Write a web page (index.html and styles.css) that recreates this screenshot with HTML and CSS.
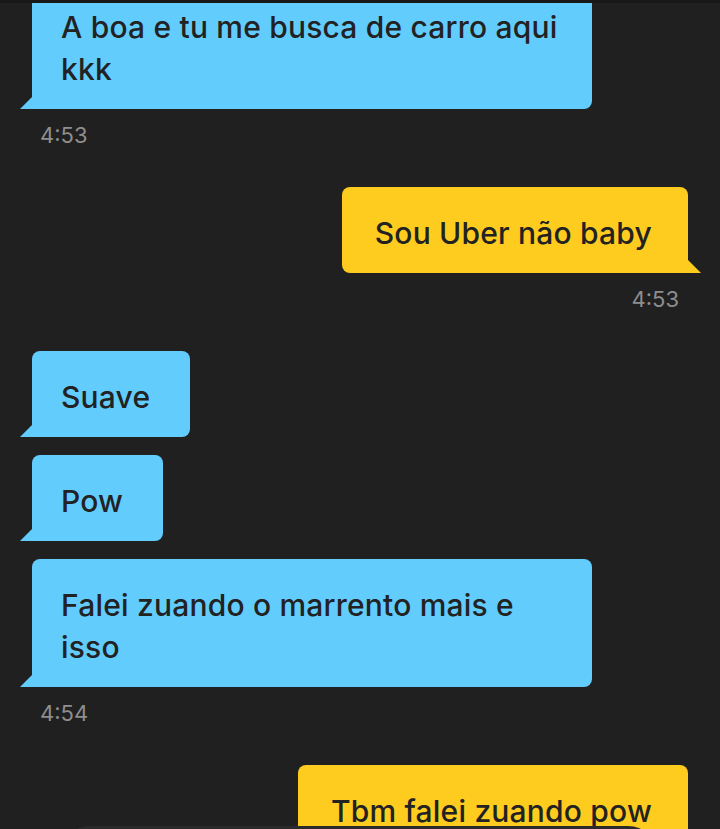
FILE: index.html
```html
<!DOCTYPE html>
<html lang="pt-BR">
<head>
    <meta charset="UTF-8">
    <meta name="viewport" content="width=device-width, initial-scale=1.0">
    <title>Chat</title>
    <link rel="stylesheet" href="styles.css">
</head>
<body>
    <div class="topbar"></div>

    <main class="chat">
        <div class="group in">
            <div class="bubble"><span>A boa e tu me busca de carro aqui kkk</span></div>
            <div class="time">4:53</div>
        </div>

        <div class="group out">
            <div class="bubble"><span>Sou Uber não baby</span></div>
            <div class="time">4:53</div>
        </div>

        <div class="group in">
            <div class="bubble"><span>Suave</span></div>
            <div class="bubble"><span>Pow</span></div>
            <div class="bubble"><span>Falei zuando o marrento mais e isso</span></div>
            <div class="time">4:54</div>
        </div>

        <div class="group out">
            <div class="bubble"><span>Tbm falei zuando pow</span></div>
        </div>
    </main>

    <div class="composer"></div>
</body>
</html>
```

FILE: styles.css
```css
* {
    margin: 0;
    padding: 0;
    box-sizing: border-box;
    font-family: 'Inter', 'Noto Sans', sans-serif;
}

body {
    width: 720px;
    height: 829px;
    overflow: hidden;
    background-color: #202020;
    color: #222222;
}

.topbar {
    position: fixed;
    top: 0;
    left: 0;
    right: 0;
    height: 3px;
    background-color: #181818;
    z-index: 2;
}

.chat {
    display: flex;
    flex-direction: column;
    gap: 39px;
    margin-top: -19px;
    padding: 0 32px;
}

.group {
    display: flex;
    flex-direction: column;
    gap: 18px;
}

.group.in {
    align-items: flex-start;
}

.group.out {
    align-items: flex-end;
}

.bubble {
    position: relative;
    max-width: 560px;
    padding: 25px 30px 19px 29px;
    font-size: 30px;
    font-weight: 500;
    line-height: 42px;
    letter-spacing: 0.2px;
    background-color: #62cdfd;
    border-radius: 8px 8px 8px 0;
}

/* espaço extra no fim da última linha, como no app */
.in .bubble span {
    padding-right: 10px;
}

.in .bubble::after {
    content: '';
    position: absolute;
    left: -12px;
    bottom: 0;
    border-bottom: 12px solid #62cdfd;
    border-left: 12px solid transparent;
}

.out .bubble {
    padding: 25px 36px 19px 33px;
    background-color: #fecb1f;
    border-radius: 8px 8px 0 8px;
}

.out .bubble::after {
    content: '';
    position: absolute;
    right: -13px;
    bottom: 0;
    border-bottom: 13px solid #fecb1f;
    border-right: 13px solid transparent;
}

.time {
    margin-top: -5px;
    font-size: 22px;
    line-height: 26px;
    color: #8e8e8e;
}

.in .time {
    padding-left: 8px;
}

.out .time {
    padding-right: 9px;
}

.composer {
    position: fixed;
    top: 826px;
    left: 60px;
    right: 62px;
    height: 60px;
    border-radius: 30px;
    background-color: #2a2a2a;
}
```
